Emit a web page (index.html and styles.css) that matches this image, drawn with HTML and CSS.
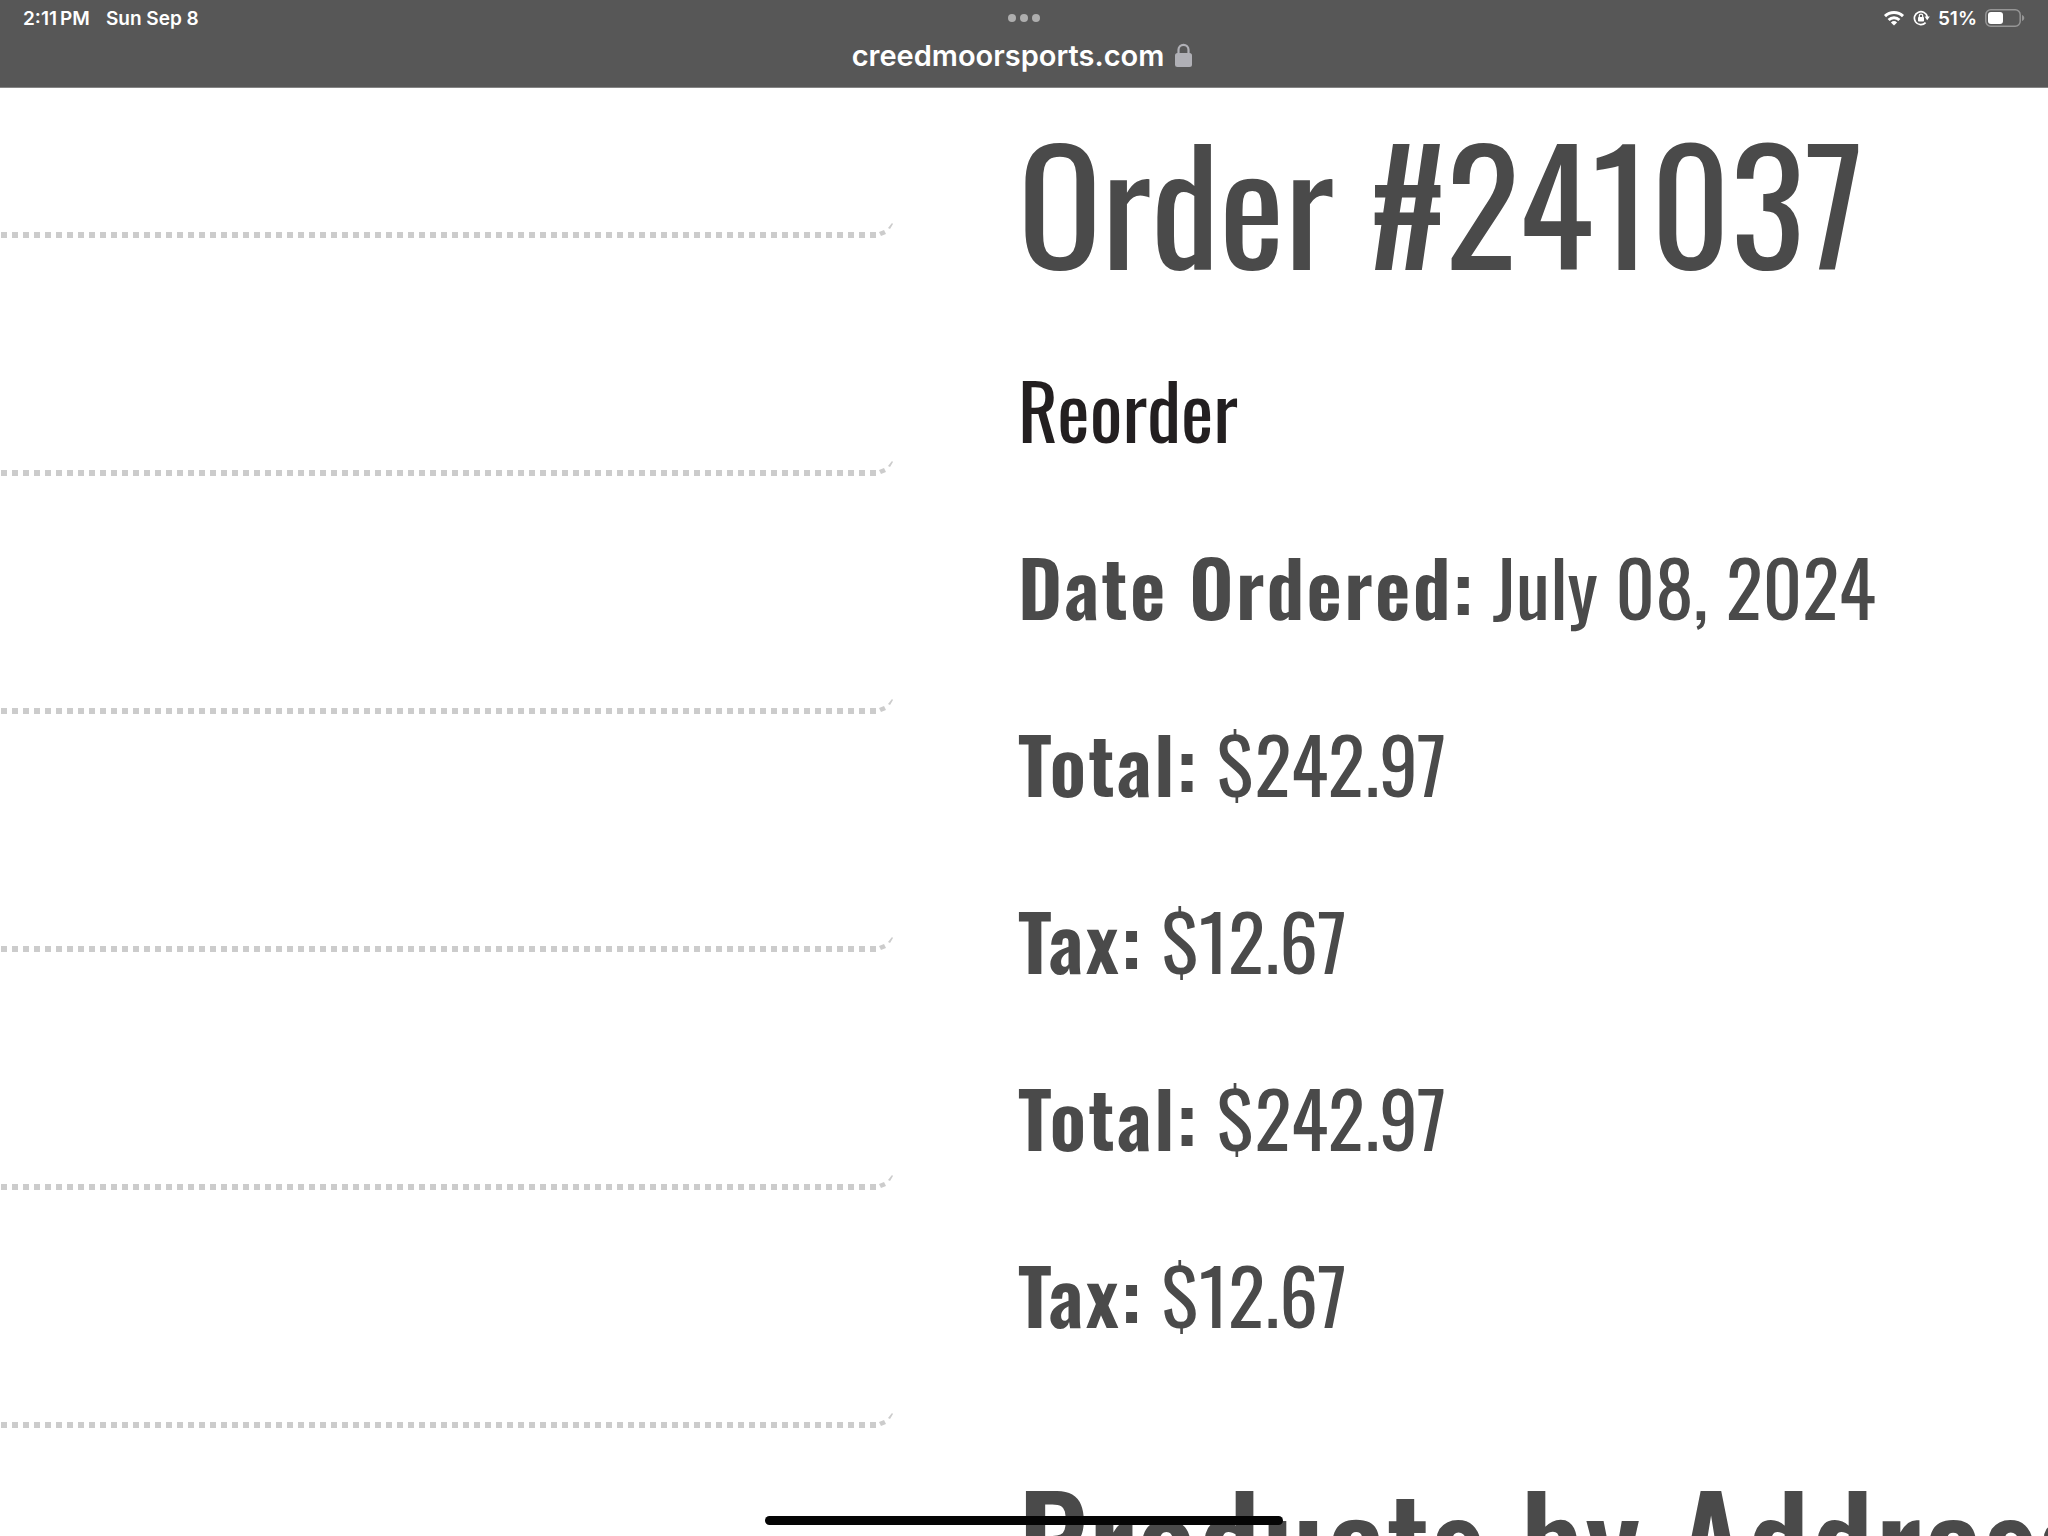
FILE: index.html
```html
<!DOCTYPE html>
<html lang="en">
<head>
<meta charset="utf-8">
<title>Order #241037</title>
<link rel="stylesheet" href="styles.css">
</head>
<body>
<header class="bar">
  <div class="status">
    <div class="status-left"><span>2:11&#8201;PM</span><span>Sun Sep 8</span></div>
    <svg class="more" width="32" height="8" viewBox="0 0 32 8" fill="#aeaeae" aria-hidden="true"><circle cx="4" cy="4" r="4"/><circle cx="16" cy="4" r="4"/><circle cx="28" cy="4" r="4"/></svg>
    <div class="status-right">
      <svg width="22" height="16" viewBox="0 0 22 16" fill="none" stroke="#fff" stroke-width="3" aria-hidden="true"><path d="M2 6.2a13 13 0 0 1 18 0"/><path d="M5.6 10a7.8 7.8 0 0 1 10.8 0"/><path d="M11 15.6 7.9 12.4a4.6 4.6 0 0 1 6.2 0z" fill="#fff" stroke="none"/></svg>
      <svg width="17" height="16" viewBox="0 0 17 16" fill="none" stroke="#fff" stroke-width="1.7" aria-hidden="true"><path d="M12.6 12.7A6.5 6.5 0 1 1 14.3 7"/><path d="M11.6 6.6h5.2l-2.6 3.6z" fill="#fff" stroke="none"/><rect x="5" y="7" width="6" height="4.6" rx=".8" fill="#fff" stroke="none"/><path d="M6.3 7.2V5.8a1.7 1.7 0 0 1 3.4 0v1.4" stroke-width="1.2"/></svg>
      <span>51%</span>
      <svg width="40" height="18" viewBox="0 0 40 18" aria-hidden="true"><rect x=".8" y=".8" width="34.4" height="16.4" rx="5" fill="none" stroke="#969696" stroke-width="1.5"/><rect x="3" y="3" width="15" height="12" rx="3" fill="#fff"/><path d="M37 6c3 1 3 5 0 6z" fill="#969696"/></svg>
    </div>
  </div>
  <div class="address">
    <span>creedmoorsports.com</span>
    <svg width="18" height="24" viewBox="0 0 18 24" aria-hidden="true"><rect x="0" y="10" width="17" height="14" rx="2.5" fill="#b0b0b6"/><path d="M3.5 11V6.8a5 5 0 0 1 10 0V11" fill="none" stroke="#b0b0b6" stroke-width="2.2"/></svg>
  </div>
</header>
<div class="page">
  <ul class="rules">
    <li><svg class="corner" viewBox="0 0 20 20"><use href="#bend"/></svg></li>
    <li><svg class="corner" viewBox="0 0 20 20"><use href="#bend"/></svg></li>
    <li><svg class="corner" viewBox="0 0 20 20"><use href="#bend"/></svg></li>
    <li><svg class="corner" viewBox="0 0 20 20"><use href="#bend"/></svg></li>
    <li><svg class="corner" viewBox="0 0 20 20"><use href="#bend"/></svg></li>
    <li><svg class="corner" viewBox="0 0 20 20"><defs><g id="bend" fill="#ccc"><path d="M3 14l5-2 2 4-5 2z"/><path d="M12 10l4-5 1 1-3 5z"/></g></defs><use href="#bend"/></svg></li>
  </ul>
  <main class="order">
    <h1>Order #241037</h1>
    <p><a href="#reorder">Reorder</a></p>
    <p><strong>Date Ordered:</strong> July 08, 2024</p>
    <p><strong>Total:</strong> $242.97</p>
    <p><strong>Tax:</strong> $12.67</p>
    <p><strong>Total:</strong> $242.97</p>
    <p><strong>Tax:</strong> $12.67</p>
    <h2>Products by Address</h2>
  </main>
</div>
<div class="home-indicator"></div>
</body>
</html>
```
FILE: styles.css
```css
* { box-sizing: border-box; }

body {
  margin: 0;
  height: 100vh;
  overflow: hidden;
  display: flex;
  flex-direction: column;
  background: #fff;
  color: #4a4a4a;
  font-family: Oswald, "Liberation Sans Narrow", "Roboto Condensed", sans-serif;
}

.bar {
  flex: none;
  height: 88px;
  padding: 0 23px;
  background: #575757;
  border-bottom: 1px solid #858585;
  color: #fff;
  font-family: Inter, "Liberation Sans", sans-serif;
}

.status {
  display: grid;
  grid-template-columns: 1fr auto 1fr;
  align-items: center;
  height: 36px;
  font-size: 19px;
  font-weight: 600;
}

.status-left { display: flex; gap: 16px; }
.status-right { display: flex; align-items: center; justify-content: flex-end; gap: 8px; }

.address {
  display: flex;
  align-items: center;
  justify-content: center;
  gap: 11px;
  height: 38px;
  padding-right: 3px;
  font-size: 29px;
  font-weight: 600;
}

.page {
  flex: 1;
  min-height: 0;
  display: grid;
  grid-template-columns: 43.75% 1fr;
}

.rules { list-style: none; margin: 0; padding: 0; }

.rules li {
  display: flex;
  align-items: flex-end;
  height: 238px;
}
.rules li:first-child { height: 150px; }

.rules li::before {
  content: "";
  flex: 1;
  height: 6px;
  background: repeating-linear-gradient(to left, #ccc 0 6px, transparent 6px 11px);
}

.corner { flex: none; width: 20px; height: 20px; }

.order {
  min-width: 0;
  padding: 16px 0 0 122px;
  overflow: hidden;
  white-space: nowrap;
}

h1 {
  margin: 0 0 52px;
  font-size: 155px;
  line-height: 192px;
  font-weight: 400;
}

p {
  margin: 0 0 57px;
  font-size: 77px;
  line-height: 120px;
}

a { color: #231f20; text-decoration: none; }

strong { font-weight: 600; letter-spacing: 0.03em; }

h2 {
  margin: 0;
  padding-top: 32px;
  font-size: 130px;
  line-height: 192px;
  font-weight: 500;
  letter-spacing: 0.02em;
}

.home-indicator {
  position: fixed;
  bottom: 11px;
  left: 50%;
  width: 518px;
  height: 9px;
  margin-left: -259px;
  border-radius: 5px;
  background: #050505;
}
```
